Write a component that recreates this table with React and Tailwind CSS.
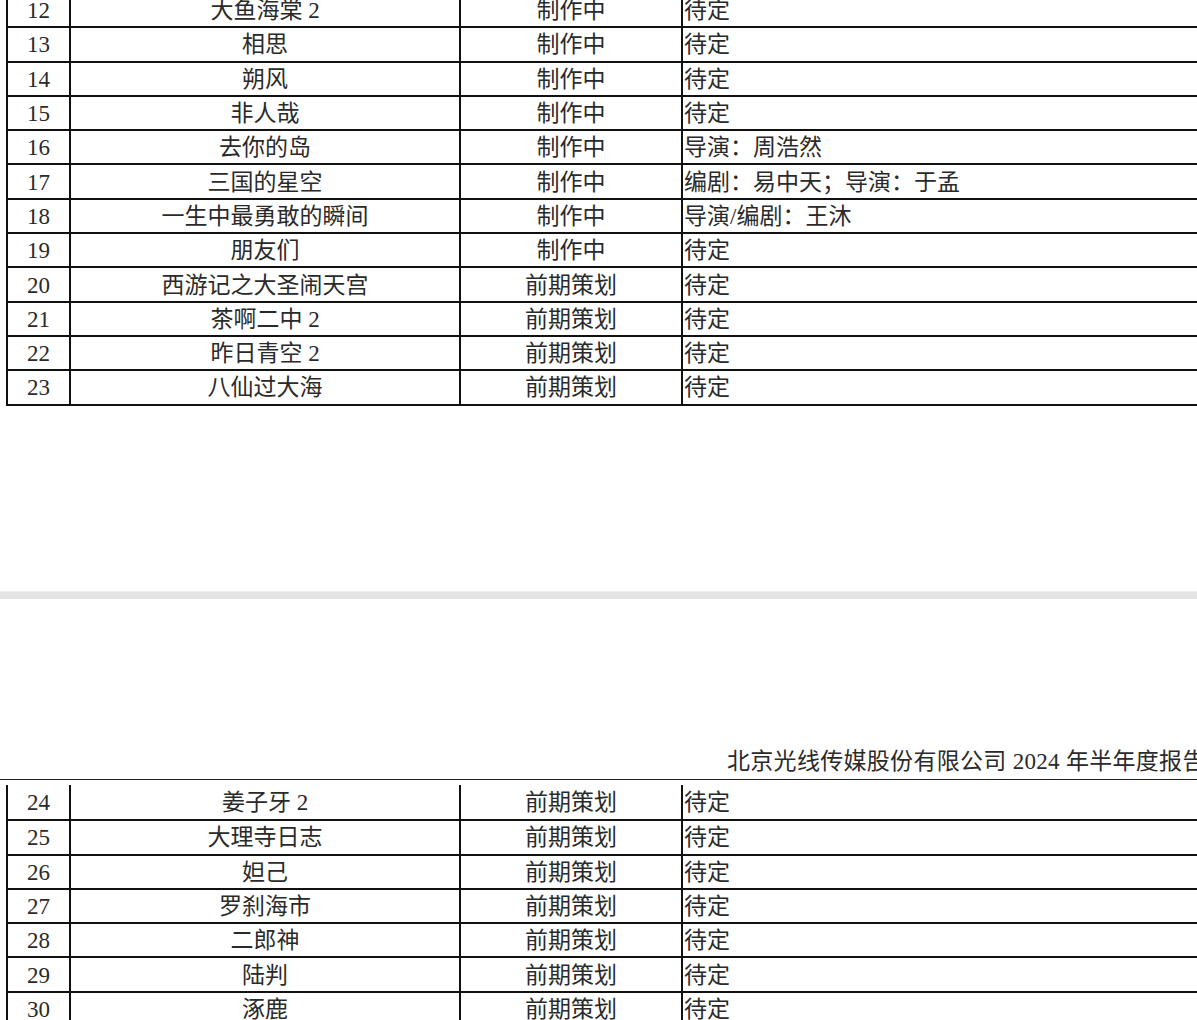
import React from "react";

const tableOne = [
  ["12", "大鱼海棠 2", "制作中", "待定"],
  ["13", "相思", "制作中", "待定"],
  ["14", "朔风", "制作中", "待定"],
  ["15", "非人哉", "制作中", "待定"],
  ["16", "去你的岛", "制作中", "导演：周浩然"],
  ["17", "三国的星空", "制作中", "编剧：易中天；导演：于孟"],
  ["18", "一生中最勇敢的瞬间", "制作中", "导演/编剧：王沐"],
  ["19", "朋友们", "制作中", "待定"],
  ["20", "西游记之大圣闹天宫", "前期策划", "待定"],
  ["21", "茶啊二中 2", "前期策划", "待定"],
  ["22", "昨日青空 2", "前期策划", "待定"],
  ["23", "八仙过大海", "前期策划", "待定"],
];

const tableTwo = [
  ["24", "姜子牙 2", "前期策划", "待定"],
  ["25", "大理寺日志", "前期策划", "待定"],
  ["26", "妲己", "前期策划", "待定"],
  ["27", "罗刹海市", "前期策划", "待定"],
  ["28", "二郎神", "前期策划", "待定"],
  ["29", "陆判", "前期策划", "待定"],
  ["30", "涿鹿", "前期策划", "待定"],
];

function Row({ cells, first }) {
  const [no, name, status, staff] = cells;
  return (
    <div
      className={`flex items-stretch border-b-2 border-[#111] ${
        first ? "h-[36.3px]" : "h-[34.3px]"
      }`}
    >
      <div className="w-[63px] shrink-0 border-r-2 border-[#111] flex items-center justify-center pt-px">
        {no}
      </div>
      <div className="w-[390px] shrink-0 border-r-2 border-[#111] flex items-center justify-center pt-px">
        {name}
      </div>
      <div className="w-[222px] shrink-0 border-r-2 border-[#111] flex items-center justify-center pt-px">
        {status}
      </div>
      <div className="flex-1 flex items-center pl-px pt-px whitespace-nowrap">{staff}</div>
    </div>
  );
}

export default function App() {
  return (
    <div
      className="w-[1197px] h-[1020px] overflow-hidden bg-white text-[#2a2a2a] text-[23px] leading-none"
      style={{ fontFamily: '"Liberation Serif", "Noto Sans CJK SC", serif' }}
    >
      {/* page one, tail of the table */}
      <div className="-mt-[6px] ml-[6px] w-[1300px] border-l-2 border-[#111]">
        {tableOne.map((r) => (
          <Row key={r[0]} cells={r} />
        ))}
      </div>

      <div className="h-[185.4px]" />
      <div className="h-px bg-[#eeeeee]" />
      <div className="h-[7px] bg-[#e3e3e3]" />

      {/* page two header */}
      <div className="h-[180px] flex flex-col justify-end">
        <div className="pl-[727px] pb-[5px] whitespace-nowrap leading-[24px] tracking-[0.3px]">
          北京光线传媒股份有限公司 2024 年半年度报告
        </div>
      </div>
      <div className="h-[1.5px] bg-[#222]" />
      <div className="h-[4.5px]" />

      <div className="ml-[6px] w-[1300px] border-l-2 border-[#111]">
        {tableTwo.map((r, i) => (
          <Row key={r[0]} cells={r} first={i === 0} />
        ))}
      </div>
    </div>
  );
}
